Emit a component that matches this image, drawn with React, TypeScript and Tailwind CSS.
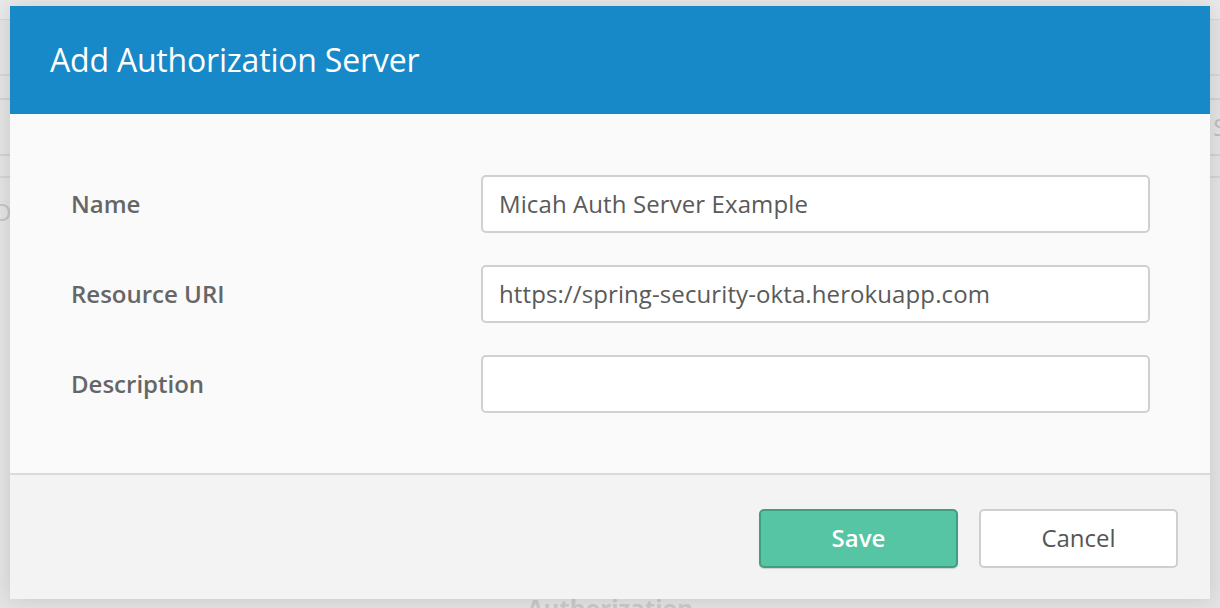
import * as React from "react";

const font = { fontFamily: '"Open Sans", "Liberation Sans", sans-serif' };

function Field({ label, value }: { label: string; value: string }) {
  return (
    <div className="flex items-center h-[58px]">
      <label className="w-[410px] shrink-0 text-[24px] font-semibold text-[#666]">{label}</label>
      <div className="flex-1 h-[58px] rounded-[5px] border-2 border-[#d0d0d0] bg-white flex items-center px-[16px] text-[24px] text-[#5a5a5a] tracking-[0.1px]">
        {value}
      </div>
    </div>
  );
}

export default function App() {
  return (
    <div className="relative w-[1220px] h-[608px] overflow-hidden bg-[#e3e3e3]" style={font}>
      {/* faded page behind the dialog */}
      <div className="absolute inset-0 flex flex-col">
        <div className="h-[20px] bg-[#e9e9e9] border-b border-[#d8d8d8]" />
        <div className="h-[56px] border-b-2 border-[#d6d6d6]" />
        <div className="h-[22px]" />
        <div className="h-[58px] mx-[-10px] rounded-[5px] border-2 border-[#d2d2d2] flex items-center justify-end text-[24px] text-[#bdbdbd]">
          <span className="mr-[-12px]">Se</span>
        </div>
        <div className="h-[22px] border-b-2 border-[#d4d4d4]" />
        <div className="pt-[16px] text-[24px] text-[#c4c4c4]">
          <span className="ml-[-6px]">D</span>
        </div>
        <div className="flex-1" />
        <div className="text-center text-[24px] font-bold text-[#c9c9c9] leading-none translate-y-[12px]">Authorization</div>
      </div>

      <div className="absolute left-[10px] top-[6px] w-[1200px] shadow-[0_0_18px_rgba(0,0,0,0.12)]">
        <div className="h-[108px] bg-[#1789c8] flex items-center px-[40px]">
          <h1 className="text-[32px] text-white font-normal tracking-[-0.2px]">Add Authorization Server</h1>
        </div>
        <div className="bg-[#fafafa] pt-[61px] pb-[60px] pl-[61px] pr-[60px] flex flex-col gap-[32px] border-b-2 border-[#dadada]">
          <Field label="Name" value="Micah Auth Server Example" />
          <Field label="Resource URI" value="https://spring-security-okta.herokuapp.com" />
          <Field label="Description" value="" />
        </div>
        <div className="h-[124px] bg-[#f3f3f3] flex items-center justify-end gap-[21px] pr-[32px] pt-[2px]">
          <button className="w-[199px] h-[59px] rounded-[5px] border-2 border-[#409f83] bg-[#55c5a3] text-white text-[24px] font-semibold shadow-[0_1px_1px_rgba(0,0,0,0.15)]">
            Save
          </button>
          <button className="w-[199px] h-[59px] rounded-[5px] border-2 border-[#cfcfcf] bg-white text-[#555] text-[24px]">
            Cancel
          </button>
        </div>
      </div>
    </div>
  );
}
